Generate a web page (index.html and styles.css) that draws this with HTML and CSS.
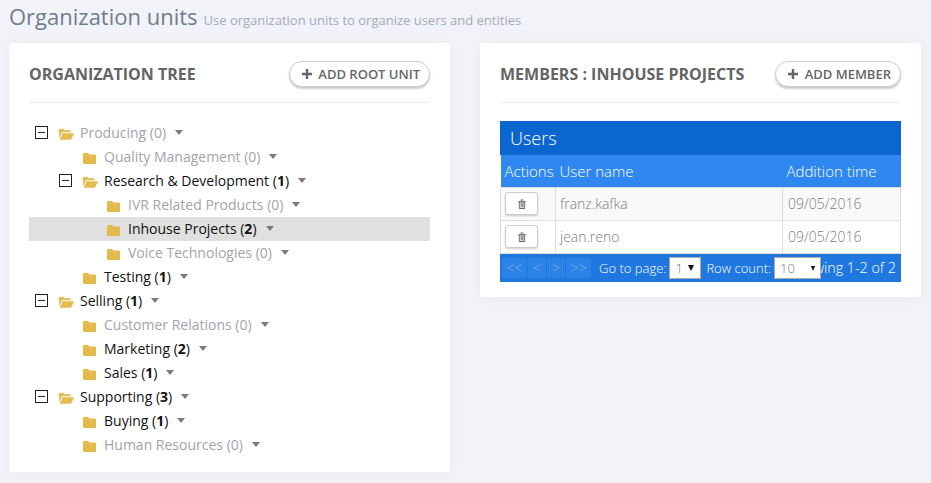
FILE: index.html
```html
<!DOCTYPE html>
<html lang="en">
<head>
<meta charset="utf-8">
<title>Organization units</title>
<link rel="stylesheet" href="styles.css">
</head>
<body>
<svg class="defs" width="0" height="0" aria-hidden="true">
  <symbol id="closed" viewBox="0 0 13 12"><path d="M1 1h4l1.4 1.6H12a1 1 0 0 1 1 1V11a1 1 0 0 1-1 1H1a1 1 0 0 1-1-1V2a1 1 0 0 1 1-1z"/></symbol>
  <symbol id="open" viewBox="0 0 15 12"><path d="M0 1.6A.8.8 0 0 1 .8.8h3.4l1.3 1.4h5.3a.8.8 0 0 1 .8.8v1.3H3.4a1 1 0 0 0-.9.6L0 10.5z"/><path d="M3.4 5.2H15l-2.7 6a1 1 0 0 1-.9.6H.6z"/></symbol>
  <symbol id="plus" viewBox="0 0 10 10"><path d="M3.8 0h2.4v3.8H10v2.4H6.2V10H3.8V6.2H0V3.8h3.8z"/></symbol>
  <symbol id="trash" viewBox="0 0 9 11"><path d="M0 2h9v1H0zM3 .5h3V2H5.2V1.2H3.8V2H3z"/><path fill-rule="evenodd" d="M1 3h7v7a1 1 0 0 1-1 1H2a1 1 0 0 1-1-1zm1 .8V10h5V3.8z"/><path d="M3 4.5h.8V9.5H3zM4.2 4.5H5V9.5h-.8zM5.4 4.5h.8V9.5h-.8z"/></symbol>
</svg>

<header class="page-head">
  <h1 class="page-title">Organization units</h1>
  <small class="page-sub">Use organization units to organize users and entities</small>
</header>

<main class="columns">
  <section class="card">
    <div class="card-head">
      <h2 class="card-title">ORGANIZATION TREE</h2>
      <button class="pill"><svg class="plus"><use href="#plus"/></svg>ADD ROOT UNIT</button>
    </div>
    <div class="tree">
      <div class="row l0 empty"><span class="exp"></span><svg class="fo"><use href="#open"/></svg><span>Producing (0)</span><i class="caret"></i></div>
      <div class="row l1 leaf empty"><svg class="fc"><use href="#closed"/></svg><span>Quality Management (0)</span><i class="caret"></i></div>
      <div class="row l1"><span class="exp"></span><svg class="fo"><use href="#open"/></svg><span>Research &amp; Development (<b>1</b>)</span><i class="caret"></i></div>
      <div class="row l2 leaf empty"><svg class="fc"><use href="#closed"/></svg><span>IVR Related Products (0)</span><i class="caret"></i></div>
      <div class="row l2 leaf selected"><svg class="fc"><use href="#closed"/></svg><span>Inhouse Projects (<b>2</b>)</span><i class="caret"></i></div>
      <div class="row l2 leaf empty"><svg class="fc"><use href="#closed"/></svg><span>Voice Technologies (0)</span><i class="caret"></i></div>
      <div class="row l1 leaf"><svg class="fc"><use href="#closed"/></svg><span>Testing (<b>1</b>)</span><i class="caret"></i></div>
      <div class="row l0"><span class="exp"></span><svg class="fo"><use href="#open"/></svg><span>Selling (<b>1</b>)</span><i class="caret"></i></div>
      <div class="row l1 leaf empty"><svg class="fc"><use href="#closed"/></svg><span>Customer Relations (0)</span><i class="caret"></i></div>
      <div class="row l1 leaf"><svg class="fc"><use href="#closed"/></svg><span>Marketing (<b>2</b>)</span><i class="caret"></i></div>
      <div class="row l1 leaf"><svg class="fc"><use href="#closed"/></svg><span>Sales (<b>1</b>)</span><i class="caret"></i></div>
      <div class="row l0"><span class="exp"></span><svg class="fo"><use href="#open"/></svg><span>Supporting (<b>3</b>)</span><i class="caret"></i></div>
      <div class="row l1 leaf"><svg class="fc"><use href="#closed"/></svg><span>Buying (<b>1</b>)</span><i class="caret"></i></div>
      <div class="row l1 leaf empty"><svg class="fc"><use href="#closed"/></svg><span>Human Resources (0)</span><i class="caret"></i></div>
    </div>
  </section>

  <section class="card">
    <div class="card-head">
      <h2 class="card-title">MEMBERS : INHOUSE PROJECTS</h2>
      <button class="pill"><svg class="plus"><use href="#plus"/></svg>ADD MEMBER</button>
    </div>
    <div class="grid-wrap">
      <div class="grid-caption">Users</div>
      <table class="grid">
        <colgroup><col class="c1"><col class="c2"><col class="c3"></colgroup>
        <thead><tr><th>Actions</th><th>User name</th><th>Addition time</th></tr></thead>
        <tbody>
          <tr class="odd"><td class="act"><button class="del"><svg class="trash"><use href="#trash"/></svg></button></td><td>franz.kafka</td><td>09/05/2016</td></tr>
          <tr><td class="act"><button class="del"><svg class="trash"><use href="#trash"/></svg></button></td><td>jean.reno</td><td>09/05/2016</td></tr>
        </tbody>
      </table>
      <div class="pager">
        <div class="info">Showing 1-2 of 2</div>
        <div class="controls">
          <span class="pg wide">&lt;&lt;</span><span class="pg">&lt;</span><span class="pg">&gt;</span><span class="pg wide">&gt;&gt;</span>
          <span class="lbl first">Go to page:</span>
          <span class="sel s1">1<i class="arr"></i></span>
          <span class="lbl second">Row count:</span>
          <span class="sel s2">10<i class="arr small"></i></span>
        </div>
      </div>
    </div>
  </section>
</main>
</body>
</html>
```
FILE: styles.css
```css
* { box-sizing: border-box; }
html, body { height: 100%; }
body {
  margin: 0;
  padding: 0 10px 0 9px;
  background: #f2f3f8;
  font-family: "Open Sans", sans-serif;
  font-size: 14px;
  overflow: hidden;
}
.defs { position: absolute; }

.page-head {
  height: 43px;
  display: flex;
  align-items: baseline;
  gap: 6px;
}
.page-title {
  margin: 0;
  font-size: 22px;
  line-height: 32px;
  font-weight: 400;
  color: #6f7d8b;
}
.page-sub {
  font-size: 13px;
  color: #a2acb6;
}

.columns {
  display: flex;
  align-items: flex-start;
  gap: 30px;
}
.card {
  flex: 0 0 441px;
  background: #fff;
  border-radius: 2px;
  padding: 0 20px 15px;
  box-shadow: 0 1px 12px rgba(80, 90, 120, .06);
}
.card-head {
  height: 60px;
  display: flex;
  align-items: center;
  justify-content: space-between;
  border-bottom: 1px solid #ebedf2;
  padding-top: 3px;
}
.card-title {
  margin: 0;
  font-size: 16px;
  font-weight: 700;
  color: #646464;
}
.pill {
  height: 26px;
  padding: 0 9px 0 12px;
  display: flex;
  align-items: center;
  gap: 6.5px;
  background: #fff;
  border: 1px solid #ccc;
  border-radius: 13px;
  box-shadow: 0 2px 2px rgba(0, 0, 0, .2);
  font: 600 13px "Open Sans", sans-serif;
  color: #666;
}
.plus { width: 10px; height: 10px; fill: #666; }

.tree { padding-top: 18px; }
.row {
  height: 24px;
  display: flex;
  align-items: center;
  color: #111;
  padding-left: 6px;
  padding-bottom: 2px;
}
.row.l1 { padding-left: 30px; }
.row.l2 { padding-left: 54px; }
.row.leaf.l1 { padding-left: 54px; }
.row.leaf.l2 { padding-left: 78px; }
.row.empty { color: #a3a3ab; }
.row.selected { background: #e0e0e0; }
.row b { font-weight: 700; }
.exp {
  flex: none;
  width: 13px;
  height: 13px;
  margin-right: 11px;
  border: 1px solid #222;
  position: relative;
}
.exp::after {
  content: "";
  position: absolute;
  left: 2px;
  right: 2px;
  top: 5px;
  height: 1px;
  background: #222;
}
.fo { flex: none; width: 15px; height: 12px; margin-right: 6px; fill: #e3bb4c; margin-top: 4px; }
.fc { flex: none; width: 13px; height: 12px; margin-right: 8px; fill: #e3bb4c; margin-top: 4px; }
.caret {
  flex: none;
  margin-left: 9px;
  width: 0;
  height: 0;
  border-left: 4px solid transparent;
  border-right: 4px solid transparent;
  border-top: 5px solid #7a7a7a;
}

.grid-wrap { margin-top: 18px; }
.grid-caption {
  height: 34px;
  background: #0b66d0;
  color: #fff;
  font-size: 18px;
  line-height: 34px;
  font-weight: 300;
  padding-left: 10px;
}
.grid {
  width: 100%;
  border-collapse: collapse;
  table-layout: fixed;
}
.c1 { width: 55px; }
.c3 { width: 118px; }
.grid th {
  height: 32px;
  padding: 0 0 0 4px;
  background: #2e88ef;
  color: #fff;
  font-size: 15px;
  font-weight: 300;
  text-align: left;
  white-space: nowrap;
}
.grid th + th { padding-left: 4px; }
.grid th + th + th { padding-left: 4px; }
.grid td {
  height: 33px;
  padding: 0 0 0 4px;
  border: 1px solid #ddd;
  color: #808080;
  font-size: 14px;
  font-weight: 300;
  white-space: nowrap;
}
.grid td + td + td { padding-left: 5px; }
.grid td.act { padding-left: 4px; }
.grid tr.odd td { background: #f9f9f9; }
.del {
  display: flex;
  align-items: center;
  justify-content: center;
  width: 33px;
  height: 23px;
  padding: 0;
  background: #fff;
  border: 1px solid #ccc;
  border-radius: 3px;
  box-shadow: 0 1px 2px rgba(0, 0, 0, .2);
}
.trash { width: 8px; height: 10px; fill: #666; }

.pager {
  display: grid;
  height: 28px;
  align-items: center;
  background: #1f77e0;
  color: #fff;
  font-size: 14.3px;
  font-weight: 300;
}
.info, .controls { grid-area: 1 / 1; }
.info { justify-self: end; padding-right: 5px; white-space: nowrap; }
.controls { display: flex; align-items: center; padding-left: 2px; }
.pg {
  width: 18px;
  height: 20px;
  margin-right: 1px;
  background: #2c82e6;
  color: #7fb3f0;
  font-size: 14px;
  line-height: 20px;
  text-align: center;
}
.pg.wide { width: 25px; }
.lbl { white-space: nowrap; font-size: 13px; }
.lbl.first { margin-left: 7px; margin-right: 3px; }
.lbl.second { margin-left: 5px; margin-right: 3px; }
.sel {
  position: relative;
  height: 22px;
  line-height: 20px;
  background: #fff;
  border: 1px solid #aaa;
  color: #777;
  padding-left: 5px;
  font-size: 13px;
}
.sel.s1 { width: 32px; }
.sel.s2 { width: 47px; }
.arr {
  position: absolute;
  right: 6px;
  top: 7px;
  border-left: 3.5px solid transparent;
  border-right: 3.5px solid transparent;
  border-top: 6px solid #111;
}
.arr.small {
  right: 5px;
  top: 8px;
  border-left-width: 2.5px;
  border-right-width: 2.5px;
  border-top-width: 5px;
}
```
